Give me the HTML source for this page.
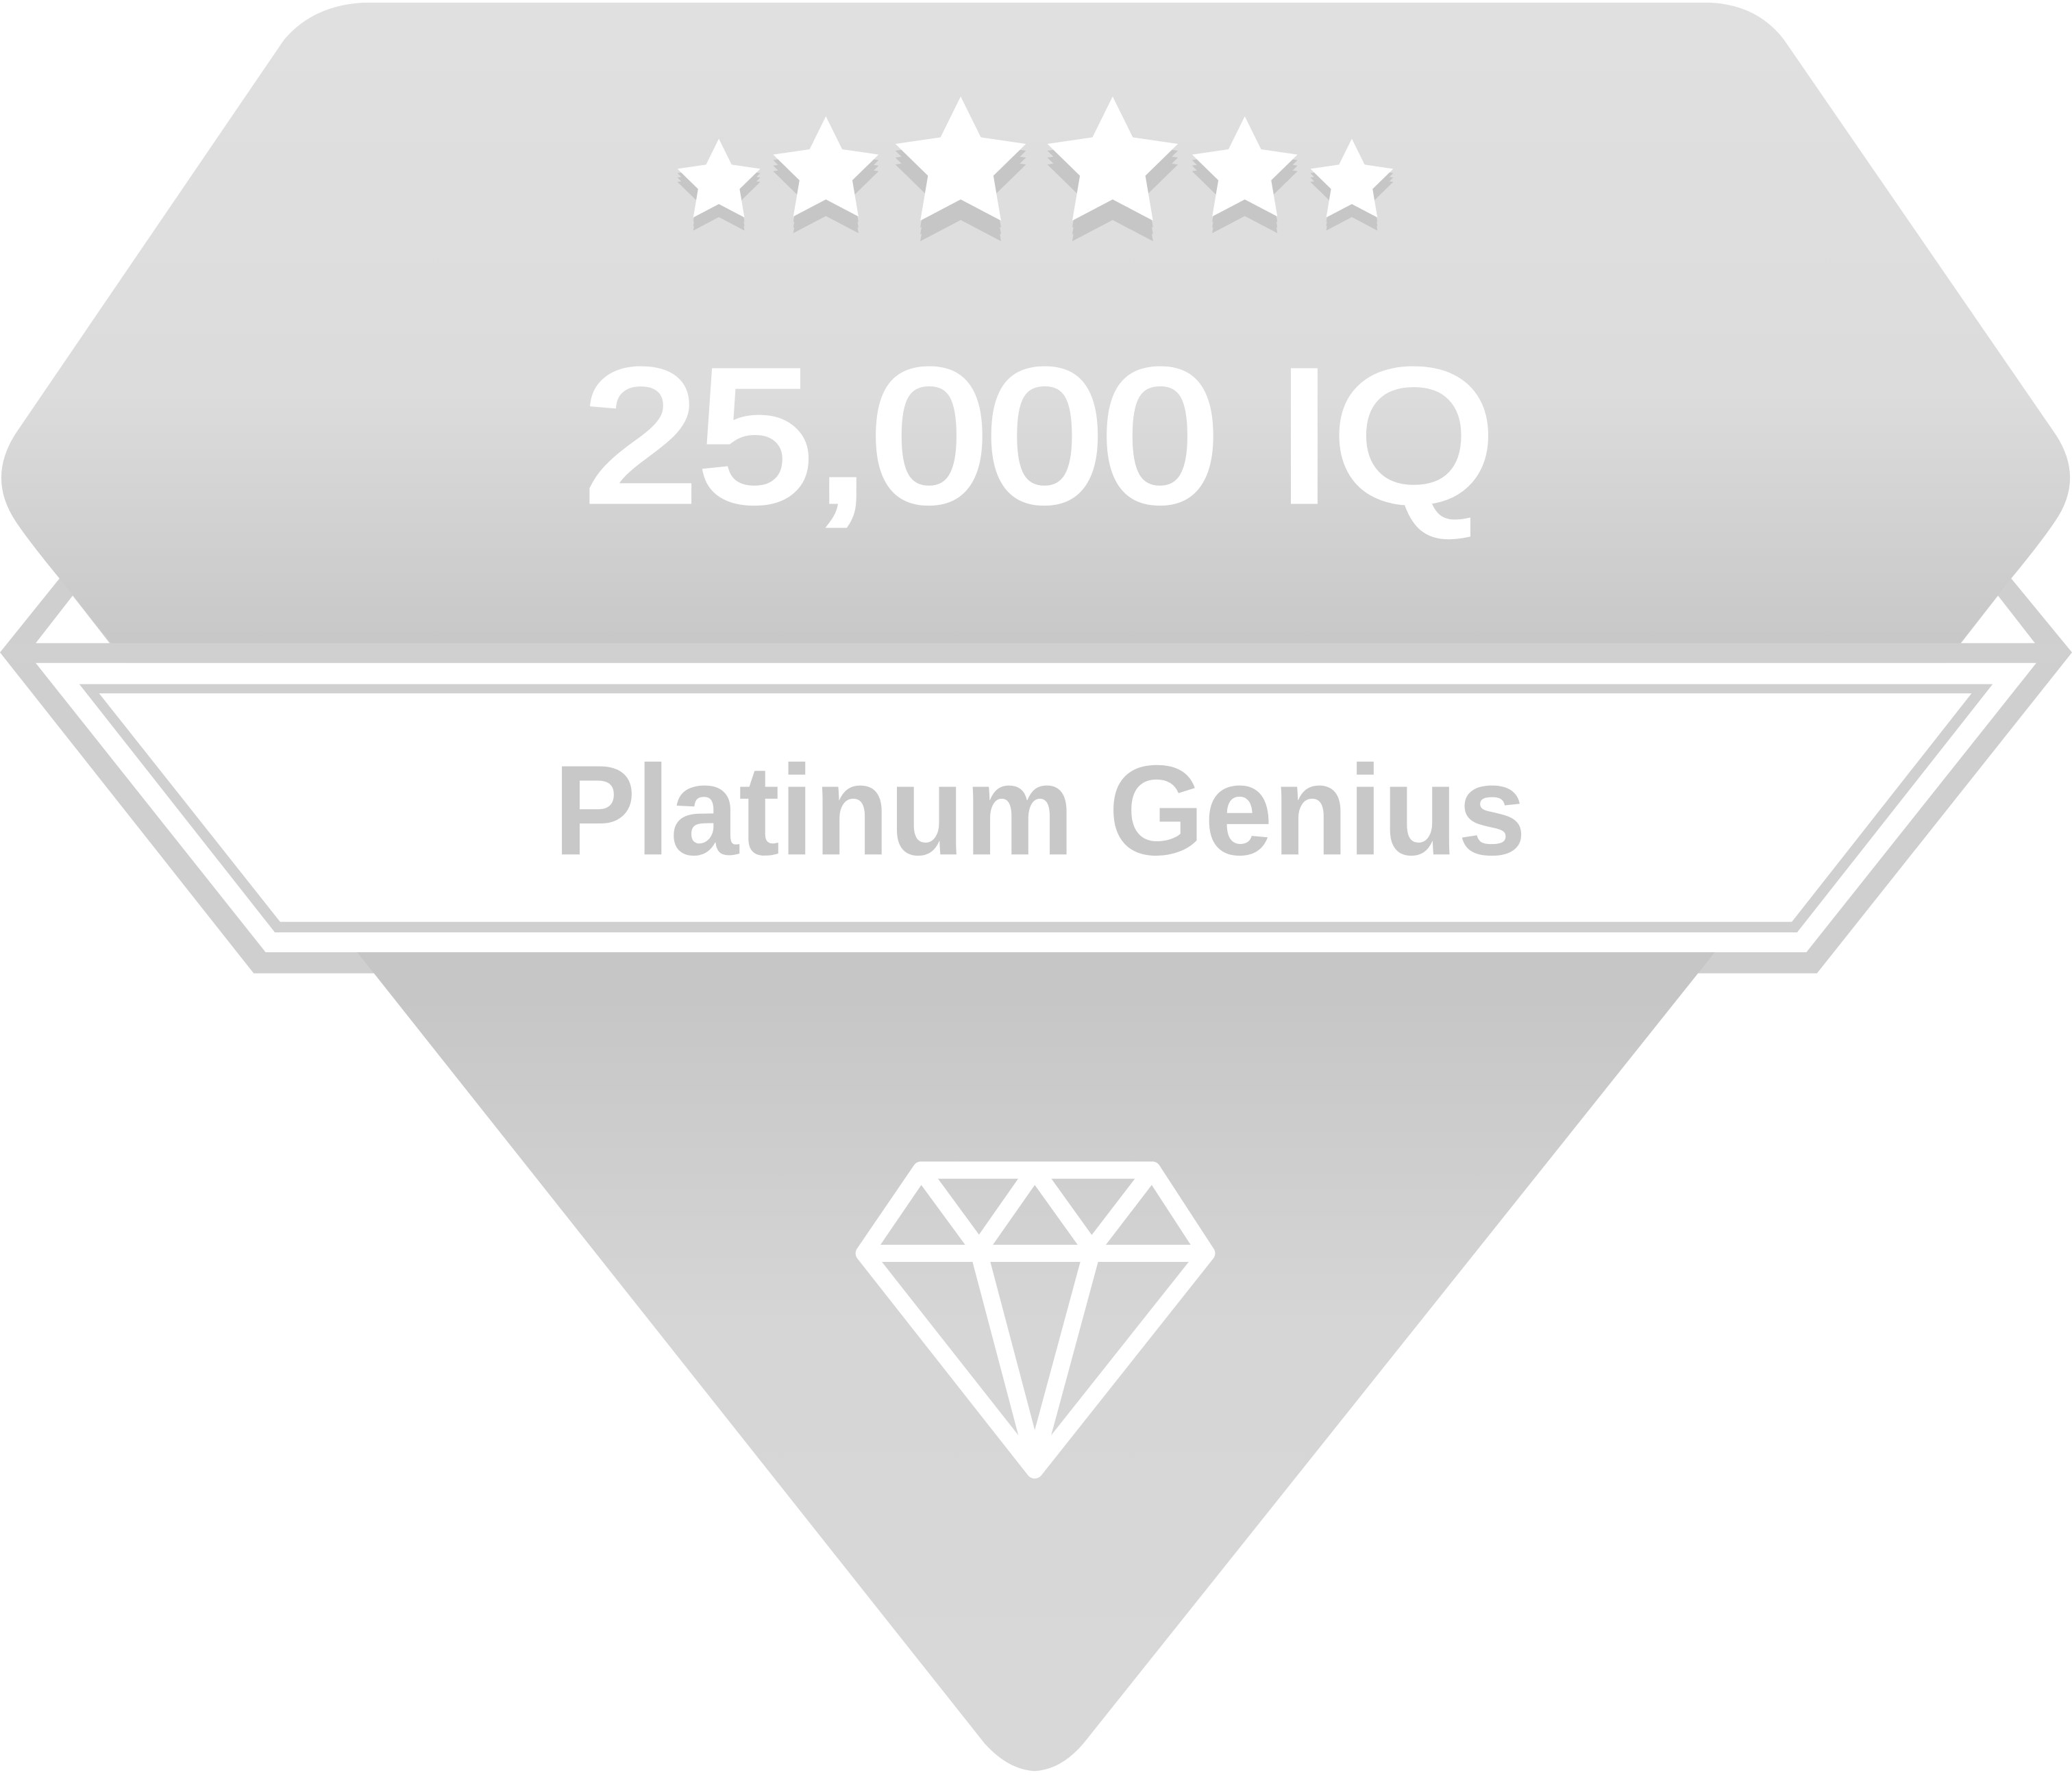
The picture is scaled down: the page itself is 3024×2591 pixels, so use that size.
<!DOCTYPE html>
<html><head><meta charset="utf-8"><style>html,body{margin:0;padding:0;background:#fff}svg{display:block}</style></head>
<body>
<svg width="3024" height="2591" viewBox="0 0 1568 1344" preserveAspectRatio="none" xmlns="http://www.w3.org/2000/svg">
<defs>
<linearGradient id="g" x1="0" y1="0" x2="0" y2="1">
<stop offset="0" stop-color="#e0e0e0"/><stop offset="0.22" stop-color="#dcdcdc"/><stop offset="0.36" stop-color="#c8c8c8"/><stop offset="0.56" stop-color="#c6c6c6"/><stop offset="0.75" stop-color="#d6d6d6"/><stop offset="1" stop-color="#d8d8d8"/>
</linearGradient>
<polygon id="s" points="0,-1 0.294,-0.405 0.951,-0.309 0.476,0.155 0.588,0.809 0,0.5 -0.588,0.809 -0.476,0.155 -0.951,-0.309 -0.294,-0.405"/>
<g id="sh">
<use href="#s"/><use href="#s" y="0.1"/><use href="#s" y="0.2"/><use href="#s" y="0.3"/>
</g>
</defs>
<polygon points="0,494 45,438 1522,438 1568,494 1375,737 192,737" fill="#cfcfcf"/>
<polygon points="27,487 55,451 83,487" fill="#fff"/>
<polygon points="1484,487 1512,451 1540,487" fill="#fff"/>
<path d="M275,2 L1295,2 Q1330,4 1350,30 L1555,328 Q1578,362 1555,395 Q1545,410 1522,438 L1285,737 L820,1320 Q803,1340 783,1341 Q763,1340 745,1320 L283,737 L45,438 Q22,410 12,395 Q-10,362 12,328 L215,30 Q237,4 275,2 Z" fill="url(#g)"/>
<polygon points="6,487 1562,487 1568,494 1556,502 12,502 0,494" fill="#d0d0d0"/>
<polygon points="27,502 1541,502 1367,721 201,721" fill="#fff"/>
<polygon points="60,518 1508,518 1360,706 208,706" fill="#d0d0d0"/>
<polygon points="75,525 1492,525 1356,698 212,698" fill="#fff"/>
<g fill="#c6c6c6">
<use href="#sh" transform="translate(544,138) scale(33)"/><use href="#sh" transform="translate(625,130) scale(42)"/><use href="#sh" transform="translate(727,125) scale(52)"/><use href="#sh" transform="translate(842,125) scale(52)"/><use href="#sh" transform="translate(942,130) scale(42)"/><use href="#sh" transform="translate(1023,138) scale(33)"/>
</g>
<g fill="#fff">
<use href="#s" transform="translate(544,138) scale(33)"/><use href="#s" transform="translate(625,130) scale(42)"/><use href="#s" transform="translate(727,125) scale(52)"/><use href="#s" transform="translate(842,125) scale(52)"/><use href="#s" transform="translate(942,130) scale(42)"/><use href="#s" transform="translate(1023,138) scale(33)"/>
</g>
<text x="441" y="379" font-family="Liberation Sans, sans-serif" font-size="142" fill="#fff" stroke="#fff" stroke-width="5" textLength="690" lengthAdjust="spacingAndGlyphs">25,000 IQ</text>
<text x="419" y="647" font-family="Liberation Sans, sans-serif" font-weight="bold" font-size="97" fill="#c8c8c8" textLength="736" lengthAdjust="spacingAndGlyphs">Platinum Genius</text>
<g fill="none" stroke="#fff" stroke-width="13" stroke-linejoin="round" stroke-linecap="round">
<polygon points="697,886 872,886 913,949 783,1113 654,949"/>
<line x1="654" y1="949" x2="913" y2="949"/>
<polyline points="697,886 741,946 783,886 826,946 872,886"/>
<polyline points="741,949 783,1108 826,949"/>
</g>
</svg>
</body></html>
